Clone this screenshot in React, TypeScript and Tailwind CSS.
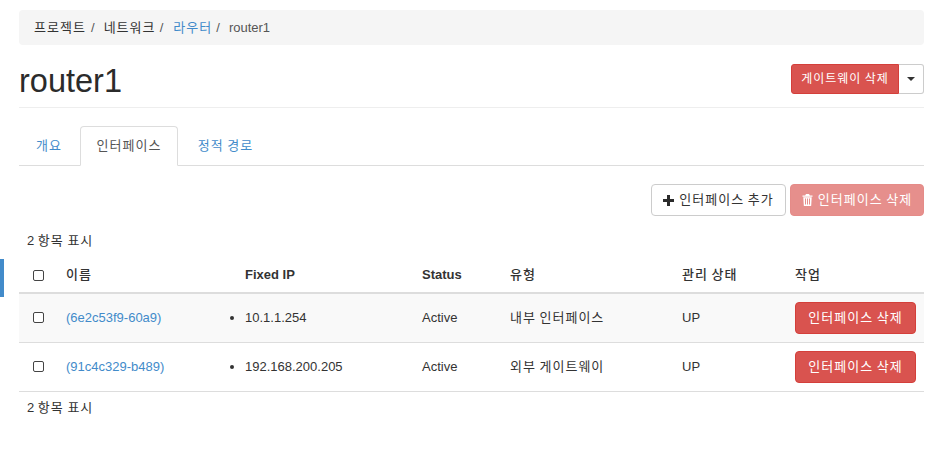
function Trash() {
  return (
    <svg width="11" height="12" viewBox="0 0 11 12" className="inline-block" fill="currentColor">
      <path d="M4 0h3l.8 1.500H10.500v1.200H.5V1.500h2.700zM1.300 3.300h8.400l-.5 8.100a.6.6 0 0 1-.6.6H2.400a.6.6 0 0 1-.6-.6zM3 4.500v6h1v-6zm2 0v6h1v-6zm2 0v6h1v-6z" />
    </svg>
  );
}
function Plus() {
  return (
    <svg width="11" height="11" viewBox="0 0 11 11" className="inline-block" fill="#2b2b2b">
      <path d="M4 0h3v4h4v3H7v4H4V7H0V4h4z" />
    </svg>
  );
}
function Box() {
  return <span className="block w-[11px] h-[11px] border border-[#444] rounded-[2px] bg-white" />;
}
function Row({ id, ip, type, shade }: { id: string; ip: string; type: string; shade?: boolean }) {
  return (
    <tr className={`border-b border-[#ddd] h-[49px] ${shade ? "bg-[#f9f9f9]" : ""}`}>
      <td className="px-2 align-middle"><span className="block pl-[6px]"><Box /></span></td>
      <td className="px-2 align-middle text-[#428bca]">{id}</td>
      <td className="px-2 align-middle">
        <div className="flex items-center">
          <span className="w-[4px] h-[4px] rounded-full bg-[#333] ml-[-15px] mr-[11px]" />
          {ip}
        </div>
      </td>
      <td className="px-2 align-middle">Active</td>
      <td className="px-2 align-middle tracking-[1px] [word-spacing:-1px]">{type}</td>
      <td className="px-2 align-middle">UP</td>
      <td className="px-2 align-middle">
        <button className="w-[121px] h-[32px] bg-[#d9534f] border border-[#d43f3a] rounded-[4px] text-white tracking-[1px] [word-spacing:-1px]">인터페이스 삭제</button>
      </td>
    </tr>
  );
}
export default function App() {
  return (
    <div className="relative h-[471px] overflow-hidden bg-white pl-[19px] pr-[2px] pt-[10px] text-[13px] text-[#333] font-['Liberation_Sans','Noto_Sans_CJK_KR',sans-serif]">
      <div className="absolute left-0 top-[259px] w-[4px] h-[38px] bg-[#428bca]" />
      <div className="h-[35px] bg-[#f5f5f5] rounded-[4px] flex items-center pl-[15px] whitespace-nowrap">
        <span className="tracking-[1px] w-[52px]">프로젝트</span><span className="ml-[5px] mr-[9px] text-[#555]">/</span>
        <span className="tracking-[1px] w-[52px]">네트워크</span><span className="ml-[4px] mr-[10px] text-[#555]">/</span>
        <span className="tracking-[1px] w-[38px] text-[#428bca]">라우터</span><span className="ml-[5px] mr-[9px] text-[#555]">/</span>
        <span className="text-[#555]">router1</span>
      </div>
      <div className="h-[63px] flex items-center justify-between border-b border-[#eee] pt-[9px]">
        <h1 className="text-[32.5px] leading-[40px] text-[#2b2b2b]">router1</h1>
        <div className="flex mt-[-4px]">
          <button className="h-[30px] w-[108px] bg-[#d9534f] border border-[#d43f3a] rounded-l-[3px] text-white text-[12px] tracking-[1px] [word-spacing:-1px]">게이트웨이 삭제</button>
          <button className="h-[30px] w-[25px] bg-white border border-l-0 border-[#ccc] rounded-r-[3px] flex items-center justify-center">
            <span className="w-0 h-0 border-x-[4px] border-x-transparent border-t-[4px] border-t-[#333]" />
          </button>
        </div>
      </div>
      <div className="mt-[18px] h-[40px] flex border-b border-[#ddd] text-[#428bca] tracking-[1px] [word-spacing:-1px]">
        <div className="w-[60px] h-[39px] flex items-center justify-center">개요</div>
        <div className="ml-[1px] w-[98px] h-[40px] flex items-center justify-center bg-white border border-[#ddd] border-b-white rounded-t-[4px] text-[#555]">인터페이스</div>
        <div className="w-[95px] h-[39px] flex items-center justify-center">정적 경로</div>
      </div>
      <div className="mt-[18px] flex justify-end gap-[4px]">
        <button className="w-[135px] h-[32px] bg-white border border-[#ccc] rounded-[4px] text-[#333] flex items-center justify-center gap-[5px] tracking-[1px] [word-spacing:-1px]"><Plus />인터페이스 추가</button>
        <button className="w-[134px] h-[32px] bg-[#e68f8c] border border-[#e58b88] rounded-[4px] text-white flex items-center justify-center gap-[5px] tracking-[1px] [word-spacing:-1px]"><Trash />인터페이스 삭제</button>
      </div>
      <div className="pl-[8px] h-[17px] mt-[16px] leading-[17px]">2 <span className="tracking-[1px] [word-spacing:-1px]">항목 표시</span></div>
      <table className="w-full mt-[8px] table-fixed border-collapse">
        <colgroup>
          <col className="w-[39px]" /><col className="w-[179px]" /><col className="w-[177px]" /><col className="w-[88px]" /><col className="w-[172px]" /><col className="w-[113px]" /><col />
        </colgroup>
        <thead>
          <tr className="h-[36px] border-b-2 border-[#ddd] font-bold text-left">
            <th className="px-2"><span className="block pl-[6px] pt-[2px]"><Box /></span></th>
            <th className="px-2 font-medium tracking-[1px]">이름</th>
            <th className="px-2">Fixed IP</th>
            <th className="px-2">Status</th>
            <th className="px-2 font-medium tracking-[1px]">유형</th>
            <th className="px-2 font-medium tracking-[1px] [word-spacing:-1px]">관리 상태</th>
            <th className="px-2 font-medium tracking-[1px]">작업</th>
          </tr>
        </thead>
        <tbody>
          <Row id="(6e2c53f9-60a9)" ip="10.1.1.254" type="내부 인터페이스" shade />
          <Row id="(91c4c329-b489)" ip="192.168.200.205" type="외부 게이트웨이" />
        </tbody>
      </table>
      <div className="pl-[8px] mt-[7px] leading-[17px]">2 <span className="tracking-[1px] [word-spacing:-1px]">항목 표시</span></div>
    </div>
  );
}
